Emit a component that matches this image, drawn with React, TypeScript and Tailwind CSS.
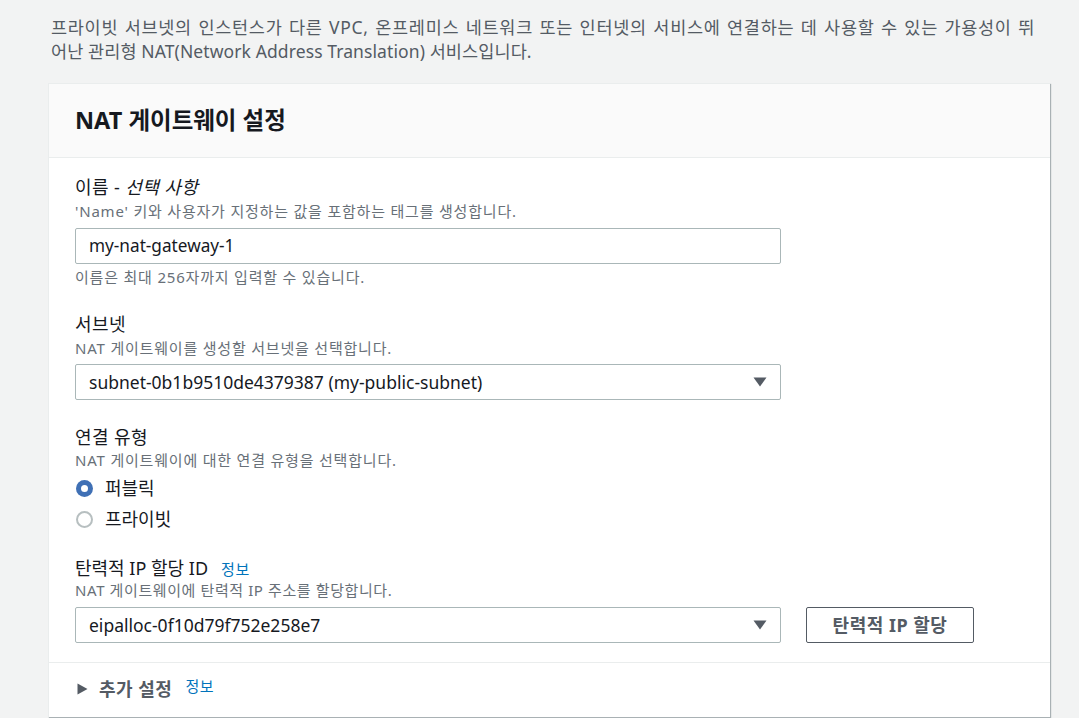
import React from "react";

const Caret = () => (
  <svg width="14" height="10" viewBox="0 0 14 10" className="shrink-0">
    <path d="M0.5 0.5 L13.5 0.5 L7 9.5 Z" fill="#545b64" />
  </svg>
);

const Select = ({ value }: { value: string }) => (
  <div className="flex h-[36px] w-[706px] items-center justify-between rounded-[2px] border border-[#aab7b8] bg-white pl-[13px] pr-[13px]">
    <span className="text-[17.5px] leading-[22px] text-[#16191f]">{value}</span>
    <Caret />
  </div>
);

export default function App() {
  return (
    <div className="min-h-[718px] bg-[#f2f3f3] font-['Noto_Sans','Noto_Sans_CJK_KR',sans-serif] text-[#16191f]">
      <div className="ml-[48px] w-[1002px] pt-[15px]">
        <div className="pl-[3px] text-[17.5px] leading-[24px] text-[#545b64]">
          <div className="w-[984px] whitespace-nowrap tracking-[0.7px] text-justify [text-align-last:justify]">
            프라이빗 서브넷의 인스턴스가 다른 VPC, 온프레미스 네트워크 또는 인터넷의 서비스에 연결하는 데 사용할 수 있는 가용성이 뛰
          </div>
          <div className="whitespace-nowrap tracking-[0.1px]">
            어난 관리형 NAT(Network Address Translation) 서비스입니다.
          </div>
        </div>
        <div className="mt-[20px] border-l border-t border-[#eaeded] bg-white shadow-[1px_1px_1px_0_rgba(0,28,36,0.3)]">
          <div className="border-b border-[#eaeded] bg-[#fafafa] px-[26px] pt-[22px] pb-[23px]">
            <h2 className="text-[23.5px] font-bold leading-[28px] text-[#16191f]">NAT 게이트웨이 설정</h2>
          </div>
          <div className="px-[26px] pt-[18px] pb-[19px]">
            {/* Name */}
            <div className="text-[18px] leading-[22px] tracking-[0.4px]">
              이름 - <i>선택 사항</i>
            </div>
            <div className="mt-[4px] text-[15px] leading-[18px] tracking-[0.8px] text-[#687078]">
              'Name' 키와 사용자가 지정하는 값을 포함하는 태그를 생성합니다.
            </div>
            <div className="mt-[8px] flex h-[36px] w-[706px] items-center rounded-[2px] border border-[#aab7b8] bg-white pl-[13px]">
              <span className="text-[17.2px] leading-[22px]">my-nat-gateway-1</span>
            </div>
            <div className="mt-[4px] text-[15px] leading-[18px] tracking-[0.8px] text-[#687078]">
              이름은 최대 256자까지 입력할 수 있습니다.
            </div>

            {/* Subnet */}
            <div className="mt-[27px] text-[18px] leading-[22px] tracking-[0.4px]">서브넷</div>
            <div className="mt-[4px] text-[15px] leading-[18px] tracking-[0.8px] text-[#687078]">
              NAT 게이트웨이를 생성할 서브넷을 선택합니다.
            </div>
            <div className="mt-[7px]">
              <Select value="subnet-0b1b9510de4379387 (my-public-subnet)" />
            </div>

            {/* Connectivity */}
            <div className="mt-[26px] text-[18px] leading-[22px] tracking-[0.4px]">연결 유형</div>
            <div className="mt-[3px] text-[15px] leading-[18px] tracking-[0.8px] text-[#687078]">
              NAT 게이트웨이에 대한 연결 유형을 선택합니다.
            </div>
            <div className="mt-[7px] flex h-[24px] items-center gap-[12px] pl-[1px]">
              <span className="flex h-[17px] w-[17px] items-center justify-center rounded-full bg-[#3f70b5]">
                <span className="h-[7px] w-[7px] rounded-full bg-white" />
              </span>
              <span className="text-[18px] leading-[24px]">퍼블릭</span>
            </div>
            <div className="mt-[7px] flex h-[24px] items-center gap-[12px] pl-[1px]">
              <span className="h-[17px] w-[17px] rounded-full border-2 border-[#b7bfc0] bg-white" />
              <span className="text-[18px] leading-[24px]">프라이빗</span>
            </div>

            {/* EIP */}
            <div className="mt-[26px] flex items-baseline gap-[13px]">
              <span className="text-[18px] leading-[22px]">탄력적 IP 할당 ID</span>
              <span className="text-[15px] leading-[18px] tracking-[0.5px] text-[#0073bb]">정보</span>
            </div>
            <div className="mt-[2px] text-[15px] leading-[18px] tracking-[0.6px] text-[#687078]">
              NAT 게이트웨이에 탄력적 IP 주소를 할당합니다.
            </div>
            <div className="mt-[8px] flex items-center gap-[25px]">
              <Select value="eipalloc-0f10d79f752e258e7" />
              <button className="flex h-[36px] w-[168px] items-center justify-center rounded-[2px] border border-[#545b64] bg-white text-[18px] font-bold tracking-[0.5px] text-[#545b64]">
                탄력적 IP 할당
              </button>
            </div>
          </div>
          <div className="border-t border-[#eaeded] px-[26px] pt-[14px] pb-[16px]">
            <div className="flex items-center">
              <svg width="11" height="12" viewBox="0 0 11 12" className="ml-[2px] mr-[11px]">
                <path d="M0.5 0.5 L10.5 6 L0.5 11.5 Z" fill="#545b64" />
              </svg>
              <span className="text-[18px] font-bold leading-[24px] tracking-[0.5px] text-[#545b64]">추가 설정</span>
              <span className="ml-[13px] -mt-[6px] text-[15px] leading-[18px] tracking-[0.5px] text-[#0073bb]">정보</span>
            </div>
          </div>
        </div>
      </div>
    </div>
  );
}
